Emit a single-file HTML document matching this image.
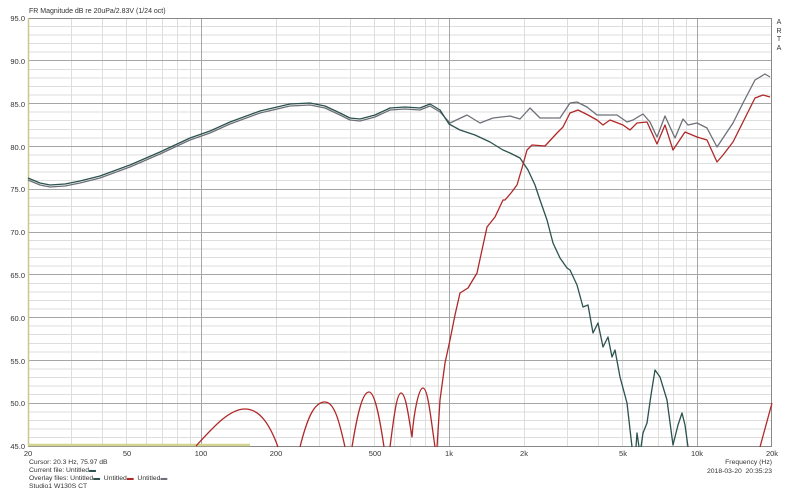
<!DOCTYPE html>
<html><head><meta charset="utf-8"><style>
body{margin:0;width:800px;height:492px;background:#fff;position:relative;overflow:hidden;font-family:"Liberation Sans",Arial,sans-serif;color:#333}
.t{position:absolute;font-size:6.8px;line-height:8px;white-space:nowrap}
.yl{position:absolute;left:0;width:25px;text-align:right;font-size:7.5px;line-height:9px}
.xl{position:absolute;top:449px;font-size:7.5px;width:30px;text-align:center;line-height:9px}
</style></head><body>
<svg width="800" height="492" style="position:absolute;left:0;top:0">
<g stroke="#dedede" stroke-width="1" fill="none">
<path d="M28 26.5H772M28 35H772M28 43.5H772M28 52H772M28 69.5H772M28 78H772M28 86.5H772M28 95H772M28 112H772M28 120.5H772M28 129.5H772M28 138H772M28 155H772M28 163.5H772M28 172H772M28 180.5H772M28 198H772M28 206.5H772M28 215H772M28 223.5H772M28 240.5H772M28 249H772M28 257.5H772M28 266H772M28 283.5H772M28 292H772M28 300.5H772M28 309H772M28 326H772M28 334.5H772M28 343.5H772M28 352H772M28 369H772M28 377.5H772M28 386H772M28 394.5H772M28 412H772M28 420.5H772M28 429H772M28 437.5H772"/>
<path d="M71.5 18V446M102.5 18V446M126.5 18V446M146.5 18V446M162.5 18V446M177.5 18V446M190.5 18V446M276.5 18V446M319.5 18V446M350.5 18V446M374.5 18V446M394.5 18V446M410.5 18V446M425.5 18V446M438.5 18V446M524.5 18V446M567.5 18V446M598.5 18V446M622.5 18V446M642.5 18V446M658.5 18V446M673.5 18V446M686.5 18V446"/>
</g>
<g stroke="#a6a6a6" stroke-width="1" fill="none">
<path d="M28 60.5H772M28 103.5H772M28 146.5H772M28 189.5H772M28 232.5H772M28 274.5H772M28 317.5H772M28 360.5H772M28 403.5H772"/>
<path d="M201.5 18V446M449.5 18V446M697.5 18V446"/>
</g>
<rect x="28.5" y="18.5" width="743" height="428" fill="none" stroke="#888"/>
<path d="M28.5 18V446" stroke="#c8c890" stroke-width="1.5"/>
<path d="M28 445H250" stroke="#d4d490" stroke-width="2.5"/>
<g fill="none" stroke-width="1.3" stroke-linejoin="round">
<polyline stroke="#6d7078" points="28,180 40,185 50,187 65,186 80,183 100,178 130,167 160,154 190,140 210,133 230,124 260,113 290,106 310,105 325,108 340,115 350,120 360,121 375,117 390,110 405,109 420,110 430,106 440,112 450,123 467,115 480,123 493,118 510,116 520,119 530,108 540,118 560,118 570,103 577,102 587,107 597,115 607,115 617,115 627,122 633,120 643,114 650,122 657,137 665,116 675,138 683,119 688,125 697,123 707,128 717,147 723,138 733,123 743,103 755,80 765,74 770,77"/>
<polyline stroke="#2b524e" points="28,178 40,183 50,185 65,184 80,181 100,176 130,165 160,152 190,138 210,131 230,122 260,111 290,104 310,103 325,106 340,113 350,118 360,119 375,115 390,108 405,107 420,108 430,104 440,110 449,124 460,130 475,135 490,142 503,150 510,153 520,158 528,170 535,185 540,200 547,220 553,243 560,258 567,268 570,270 577,285 583,307 588,305 593,333 598,323 603,347 608,337 612,357 615,350 620,377 627,403 632,447"/>
<polyline stroke="#2b524e" points="636,447 637,433 639,447"/>
<polyline stroke="#2b524e" points="641,447 643,433 647,423 651,395 655,370 660,377 667,400 673,445 678,425 682,413 685,425 688,447"/>
<path stroke="#b02828" d="M196 446C215 425 230 409 245 409C260 409 270 425 278 447"/>
<path stroke="#b02828" d="M300 447C308 415 315 402 325 402C335 402 340 425 345 447"/>
<path stroke="#b02828" d="M352 447C358 410 363 392 369 392C375 392 380 420 384 447"/>
<path stroke="#b02828" d="M390 447C394 415 397 393 401 393C406 393 409 420 412 437C414 410 419 388 423 388C428 388 431 420 435 447"/>
<polyline stroke="#b02828" points="437,447 440,400 445,363 450,340 455,315 460,293 468,288 477,273 482,250 487,227 495,217 503,200 505,200 511,193 517,185 522,168 527,150 532,145 545,146 557,133 563,127 570,113 578,110 588,115 597,120 603,125 610,120 623,125 630,130 637,123 647,122 657,144 665,125 673,150 685,132 697,137 707,140 717,162 723,155 733,142 745,118 755,98 763,95 770,97"/>
<polyline stroke="#b02828" points="760,447 766,425 772,403"/>
</g>
</svg>
<div class="t" style="left:29px;top:8px;font-size:7px">FR Magnitude dB re 20uPa/2.83V (1/24 oct)</div>
<div class="t" style="left:775px;top:19px;font-size:7px;line-height:8.5px;width:8px;text-align:center">A<br>R<br>T<br>A</div>
<div class="yl" style="top:14px">95.0</div>
<div class="yl" style="top:57px">90.0</div>
<div class="yl" style="top:100px">85.0</div>
<div class="yl" style="top:143px">80.0</div>
<div class="yl" style="top:185px">75.0</div>
<div class="yl" style="top:228px">70.0</div>
<div class="yl" style="top:271px">65.0</div>
<div class="yl" style="top:314px">60.0</div>
<div class="yl" style="top:357px">55.0</div>
<div class="yl" style="top:399px">50.0</div>
<div class="yl" style="top:442px">45.0</div>
<div class="xl" style="left:13px">20</div>
<div class="xl" style="left:112px">50</div>
<div class="xl" style="left:186px">100</div>
<div class="xl" style="left:261px">200</div>
<div class="xl" style="left:360px">500</div>
<div class="xl" style="left:434px">1k</div>
<div class="xl" style="left:509px">2k</div>
<div class="xl" style="left:608px">5k</div>
<div class="xl" style="left:682px">10k</div>
<div class="xl" style="left:757px">20k</div>
<div class="t" style="left:29px;top:459px">Cursor: 20.3 Hz, 75.97 dB</div>
<div class="t" style="left:29px;top:467px">Current file: Untitled<span style="color:#2b524e">▬</span></div>
<div class="t" style="left:29px;top:475px">Overlay files: Untitled<span style="color:#2b524e">▬</span>&nbsp; Untitled<span style="color:#b02828">▬</span>&nbsp; Untitled<span style="color:#6d7078">▬</span></div>
<div class="t" style="left:29px;top:483px">Studio1 W130S CT</div>
<div class="t" style="right:28px;top:459px;text-align:right">Frequency (Hz)</div>
<div class="t" style="right:28px;top:468px;text-align:right">2018-03-20&nbsp; 20:35:23</div>
</body></html>
